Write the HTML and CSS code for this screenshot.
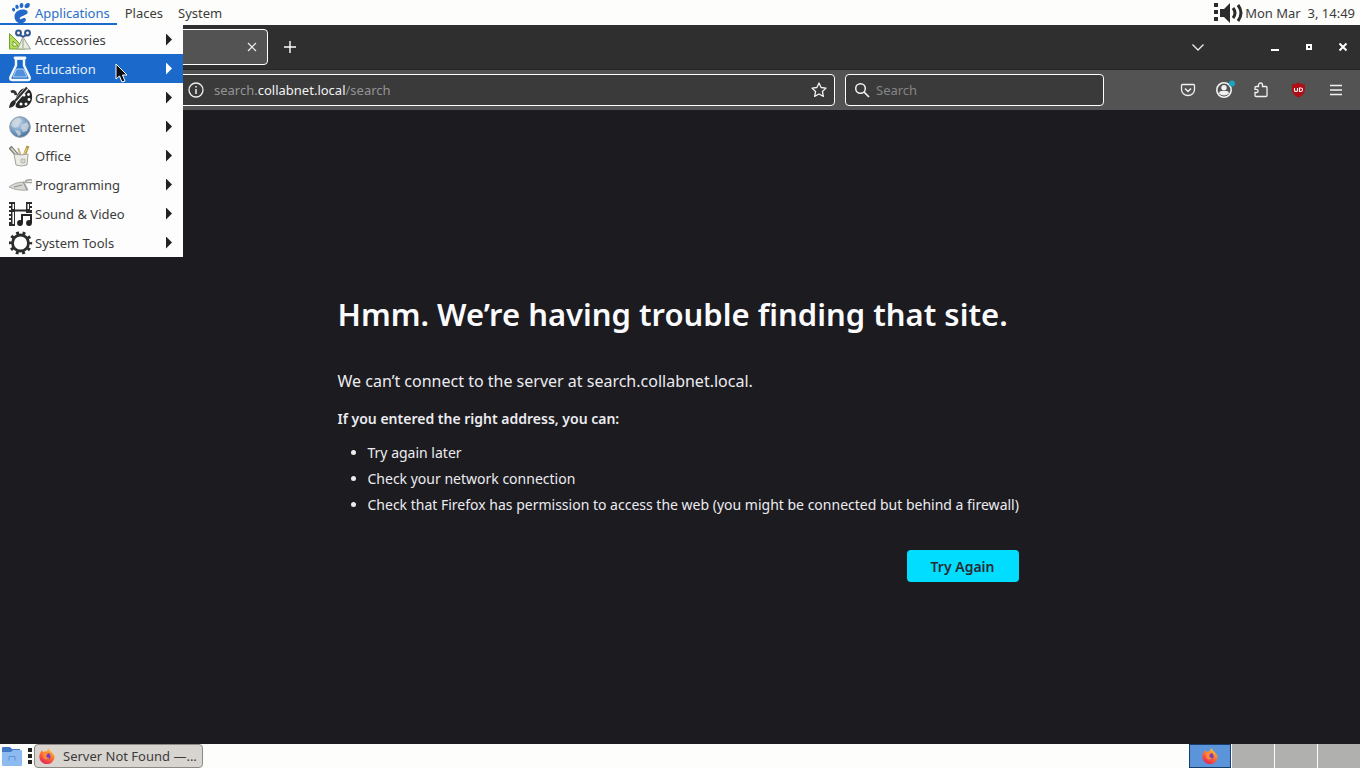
FILE: index.html
```html
<!DOCTYPE html>
<html lang="en">
<head>
<meta charset="utf-8">
<title>Server Not Found</title>
<link rel="stylesheet" href="styles.css">
</head>
<body>
<div class="desktop">
  <header class="panel panel-top">
    <nav class="menubar" aria-label="Desktop menus">
      <button class="menubar-item is-open" aria-expanded="true">
        <svg viewBox="0 0 22 22" width="22" height="22" aria-hidden="true">
          <path d="M18.500 1C21 .5 21.500 3 20.300 4.800C19 6.800 15.500 6.500 15.500 4.500C15.500 2.800 17 1.300 18.500 1Z" fill="#2468cc"/>
          <ellipse cx="12.500" cy="3.600" rx="1.900" ry="2.500" transform="rotate(8 12.500 3.600)" fill="#2468cc"/>
          <ellipse cx="8" cy="4.900" rx="1.700" ry="2.100" transform="rotate(-12 8 4.900)" fill="#2468cc"/>
          <ellipse cx="4.600" cy="7.600" rx="1.500" ry="1.800" transform="rotate(-25 4.600 7.600)" fill="#2468cc"/>
          <path d="M16.500 8C12.500 6.500 5.500 9 5.500 14.500C5.500 19 9 21.800 12.500 21.300C15.500 20.900 17.500 18.500 16.700 16.700C15.800 15 13.300 16.500 12.200 17C10.800 17.600 10.200 16.300 11.200 15.400C13 13.800 19 12.500 18.700 10C18.600 9 17.400 8.400 16.500 8Z" fill="#2468cc"/>
        </svg>
        <span>Applications</span>
      </button>
      <button class="menubar-item">Places</button>
      <button class="menubar-item">System</button>
    </nav>
    <div class="tray">
      <svg viewBox="0 0 31 22" width="31" height="22" role="img" aria-label="Volume">
        <path d="M1 1h4v4H1zM1 8h4v4H1zM1 15h4v4H1zM7 7h4l6-6v20l-6-6H7z" fill="#2b2b2b"/>
        <path d="M20 6q4 5 0 10" fill="none" stroke="#2b2b2b" stroke-width="3"/>
        <path d="M25 3q6 8 0 16" fill="none" stroke="#2b2b2b" stroke-width="3"/>
      </svg>
      <time class="clock">Mon Mar&nbsp; 3, 14:49</time>
    </div>
    <div class="menu" role="menu">
      <button class="menu-item" role="menuitem">
        <svg viewBox="0 0 22 22" width="22" height="22" aria-hidden="true">
          <path d="M.5 4.500L16 20H.5Z" fill="#b5dc58" stroke="#6fa52b"/><path d="M4 12l5 5H4z" fill="#fff" stroke="#6fa52b"/>
          <path d="M14 8l7.500 12H8.500z" fill="#e8ebe0" stroke="#98a18c"/><path d="M14 10v9" stroke="#98a18c"/>
          <circle cx="9.500" cy="4" r="2.400" fill="none" stroke="#2d568f" stroke-width="2"/><circle cx="18.500" cy="4" r="2.400" fill="none" stroke="#2d568f" stroke-width="2"/>
          <path d="M11 6q3 3 6 0" fill="none" stroke="#2d568f" stroke-width="1.800"/>
        </svg>
        <span class="menu-label">Accessories</span><span class="menu-arrow"></span>
      </button>
      <button class="menu-item is-selected" role="menuitem">
        <svg viewBox="0 0 22 26" width="22" height="26" aria-hidden="true">
          <path d="M7 2.500h8v7l5.500 11.500q1 3-2 3h-15q-3 0-2-3L7 9.500z" fill="#1b6acb" stroke="#f4f8fc" stroke-width="2.400"/>
          <path d="M6 2h10" stroke="#f4f8fc" stroke-width="2.800" stroke-linecap="round"/>
          <path d="M7.500 13h7l3.500 8H4z" fill="#4f8fdc" stroke="#b9d4f2"/>
        </svg>
        <span class="menu-label">Education</span><span class="menu-arrow"></span>
      </button>
      <button class="menu-item" role="menuitem">
        <svg viewBox="0 0 24 24" width="24" height="24" aria-hidden="true">
          <path d="M13 3c7-3 11 3 10 10-1 7-8 10-14 9-4-1-2-4-1-6s-2-4 0-7 3-5 5-6z" fill="#262827"/>
          <g fill="#fff"><circle cx="15" cy="9" r="1.500"/><circle cx="19.500" cy="8.500" r="1.400"/><circle cx="20" cy="13.500" r="1.400"/><circle cx="17" cy="18" r="1.500"/><circle cx="12" cy="18" r="1.500"/></g>
          <path d="M3 19L18 2" stroke="#fff" stroke-width="4"/><path d="M6 15L18 1.500" stroke="#333" stroke-width="2.300"/>
          <path d="M0 22q1-7 5-8l2 2q-1 5-7 6z" fill="#262827"/><path d="M2 6q4-2 5 3" stroke="#333" stroke-width="2.800" fill="none"/>
        </svg>
        <span class="menu-label">Graphics</span><span class="menu-arrow"></span>
      </button>
      <button class="menu-item" role="menuitem">
        <svg viewBox="0 0 22 22" width="22" height="22" aria-hidden="true">
          <defs><radialGradient id="globe" cx=".4" cy=".3" r=".8"><stop offset="0" stop-color="#c8d9ea"/><stop offset=".6" stop-color="#7099c2"/><stop offset="1" stop-color="#355e8c"/></radialGradient></defs>
          <circle cx="11" cy="11" r="10.300" fill="url(#globe)" stroke="#8a9bab"/>
          <path d="M3 6q4-5 8-4l2 3-4 2 1 3-4 2-4-2zM13 9l5-3 2 4-2 5-4 1-2-4zM6 14l5 1 1 4-3 1z" fill="#d9dedf" opacity=".7"/>
        </svg>
        <span class="menu-label">Internet</span><span class="menu-arrow"></span>
      </button>
      <button class="menu-item" role="menuitem">
        <svg viewBox="0 0 22 22" width="22" height="22" aria-hidden="true">
          <path d="M1 2l8 9" stroke="#77786f" stroke-width="4"/><path d="M2 3l7 8" stroke="#d8d8cf" stroke-width="1.800"/>
          <path d="M9 3l3 8" stroke="#c6b28b" stroke-width="2"/><path d="M19 1l-4 10" stroke="#b79543" stroke-width="3"/><path d="M18 3l-3 7" stroke="#f0d681"/>
          <path d="M5 9q7 2 14 0l-1 11q-6 2-11 0z" fill="#ecece7" stroke="#a4a49d"/><path d="M12 14h4v4h-4z" fill="#d8d8d2" stroke="#a9a9a1" stroke-width=".7"/>
        </svg>
        <span class="menu-label">Office</span><span class="menu-arrow"></span>
      </button>
      <button class="menu-item" role="menuitem">
        <svg viewBox="0 0 24 22" width="24" height="22" aria-hidden="true">
          <path d="M0 13q6-5 15-5l4 8q-11 1-19-3z" fill="#d7d7d4" stroke="#aaa9a5"/><path d="M14 8l4 8M5 13l8-2" stroke="#8e8e8b"/><path d="M16 9q0-4 7-3M17 8.500h6" fill="none" stroke="#a3a39f" stroke-width="1.500"/>
        </svg>
        <span class="menu-label">Programming</span><span class="menu-arrow"></span>
      </button>
      <button class="menu-item" role="menuitem">
        <svg viewBox="0 0 24 24" width="24" height="24" aria-hidden="true">
          <path d="M0 0h6v24H0zM17 0h6v11h-6z" fill="#2b2b2b"/><path d="M6 8.500h12" stroke="#2b2b2b" stroke-width="2"/>
          <path d="M0 2h2v2H0zM0 6h2v2H0zM0 10h2v2H0zM0 14h2v2H0zM0 18h2v2H0zM21 2h2v2h-2zM21 6h2v2h-2zM3.500 2H5v5H3.500zM3.500 10H5v12H3.500zM18.500 2H20v5h-1.500z" fill="#fff"/>
          <path d="M13 21v-8h9v8" fill="#fff" stroke="#262626" stroke-width="2"/><circle cx="11" cy="21" r="2.900" fill="#222"/><circle cx="20" cy="21" r="2.900" fill="#222"/>
        </svg>
        <span class="menu-label">Sound &amp; Video</span><span class="menu-arrow"></span>
      </button>
      <button class="menu-item" role="menuitem">
        <svg viewBox="0 0 24 24" width="24" height="24" aria-hidden="true">
          <circle cx="11.500" cy="12" r="10" fill="none" stroke="#2a2d2e" stroke-width="3.400" stroke-dasharray="2.800 3.483" stroke-dashoffset="1.400"/><circle cx="11.500" cy="12" r="8" fill="none" stroke="#2a2d2e" stroke-width="2.800"/>
        </svg>
        <span class="menu-label">System Tools</span><span class="menu-arrow"></span>
      </button>
    </div>
    <svg class="pointer" viewBox="0 0 14 21" width="14" height="21" aria-hidden="true">
      <path d="M1 1v15l3.500-3 2.500 6 3-1-2.500-6H12z" fill="#0b0d12" stroke="#fff"/>
    </svg>
  </header>

  <section class="browser">
    <div class="tabstrip">
      <div class="tab">
        <button class="tab-close" aria-label="Close tab"><svg viewBox="0 0 10 10" width="10" height="10"><path d="M1 1l8 8M9 1L1 9" stroke="#eee" stroke-width="1.200"/></svg></button>
      </div>
      <button class="icon-button" aria-label="New tab"><svg viewBox="0 0 14 14" width="14" height="14"><path d="M7 1v12M1 7h12" stroke="#fff" stroke-width="1.400"/></svg></button>
      <div class="window-controls">
        <button class="icon-button tab-list" aria-label="List all tabs"><svg viewBox="0 0 14 14" width="14" height="14"><path d="M1.500 4.500L7 10l5.500-5.500" fill="none" stroke="#eee" stroke-width="1.300"/></svg></button>
        <button class="icon-button" aria-label="Minimize"><svg viewBox="0 0 12 12" width="12" height="12"><path d="M2 9h8" stroke="#fff" stroke-width="2"/></svg></button>
        <button class="icon-button" aria-label="Restore"><svg viewBox="0 0 12 12" width="12" height="12"><path d="M4 4h4v4H4z" fill="none" stroke="#fff" stroke-width="2"/></svg></button>
        <button class="icon-button" aria-label="Close"><svg viewBox="0 0 12 12" width="12" height="12"><path d="M2.500 2.500l7 7M9.500 2.500l-7 7" stroke="#fff" stroke-width="2"/></svg></button>
      </div>
    </div>

    <div class="toolbar">
      <div class="field url-field">
        <svg viewBox="0 0 16 16" width="16" height="16" role="img" aria-label="Site information"><circle cx="8" cy="8" r="7" fill="none" stroke="#eee" stroke-width="1.300"/><path d="M8 7v5M8 4v1.500" stroke="#eee" stroke-width="1.500"/></svg>
        <div class="url-text" role="textbox" contenteditable="true" aria-label="Address" spellcheck="false">search.<b class="url-host">collabnet.local</b>/search</div>
        <button class="star" aria-label="Bookmark this page"><svg viewBox="0 0 16 16" width="16" height="16"><path d="M8 1l2.100 4.500 4.900.6-3.600 3.400 1 4.900L8 12l-4.400 2.400 1-4.900L1 6.100l4.900-.6z" fill="none" stroke="#f2f2f2" stroke-width="1.300" stroke-linejoin="round"/></svg></button>
      </div>
      <label class="field search-field">
        <svg viewBox="0 0 16 16" width="16" height="16" aria-hidden="true"><circle cx="6.500" cy="6.500" r="4.800" fill="none" stroke="#f2f2f2" stroke-width="1.500"/><path d="M10 10l5 5" stroke="#f2f2f2" stroke-width="1.700"/></svg>
        <input class="search-input" type="text" placeholder="Search" aria-label="Search">
      </label>
      <div class="actions">
        <button class="icon-button" aria-label="Save to Pocket"><svg viewBox="0 0 16 16" width="16" height="16"><path d="M2.500 2.500h11q1 0 1 1V7.500a6.500 6 0 0 1-13 0V3.500q0-1 1-1z" fill="none" stroke="#f2f2f2" stroke-width="1.300"/><path d="M5 6.500l3 3 3-3" fill="none" stroke="#f2f2f2" stroke-width="1.500"/></svg></button>
        <button class="icon-button" aria-label="Account"><svg viewBox="0 0 20 20" width="20" height="20"><circle cx="9" cy="10" r="7.200" fill="none" stroke="#f2f2f2" stroke-width="1.600"/><circle cx="9" cy="7.800" r="2.700" fill="#f2f2f2"/><path d="M4 13.500q0-2.500 2-2.500h6q2 0 2 2.500-5 4-10 0z" fill="#f2f2f2"/><circle cx="17" cy="3.500" r="3" fill="#18a5c4"/></svg></button>
        <button class="icon-button" aria-label="Extensions"><svg viewBox="0 0 16 16" width="16" height="16"><path d="M4.500 4.500V3a2 2 0 0 1 4 0v1.500H12q1 0 1 1v8q0 1-1 1H2q-1 0-1-1v-3h1.500a1.600 1.600 0 0 0 0-3.200H1V5.500q0-1 1-1z" fill="none" stroke="#f2f2f2" stroke-width="1.300"/></svg></button>
        <button class="icon-button" aria-label="uBlock Origin"><svg viewBox="0 0 16 16" width="16" height="16"><path d="M7.500 .5q3 1.800 6.500 2v4.500q0 6-6.500 8.500Q1 13 1 7V2.500Q4.500 2.300 7.500 .5z" fill="#b00d16"/><path d="M3.500 6v2.200q0 1.300 1.500 1.300t1.500-1.300V6M8.500 6v3.500h1q2 0 2-1.800T9.500 6z" fill="none" stroke="#fff" stroke-width="1.100"/></svg></button>
        <button class="icon-button" aria-label="Application menu"><svg viewBox="0 0 14 14" width="14" height="14"><path d="M1 2.500h12M1 7h12M1 11.500h12" stroke="#f2f2f2" stroke-width="1.300"/></svg></button>
      </div>
    </div>

    <main class="page">
      <div class="error">
        <h1 class="error-title">Hmm. We’re having trouble finding that site.</h1>
        <p class="error-lead">We can’t connect to the server at search.collabnet.local.</p>
        <p class="error-hint">If you entered the right address, you can:</p>
        <ul class="error-list">
          <li>Try again later</li>
          <li>Check your network connection</li>
          <li>Check that Firefox has permission to access the web (you might be connected but behind a firewall)</li>
        </ul>
        <div class="error-actions"><button class="primary">Try Again</button></div>
      </div>
    </main>
  </section>

  <footer class="panel panel-bottom">
    <button class="show-desktop" aria-label="Show desktop"><svg viewBox="0 0 20 20" width="20" height="20"><path d="M0 2q0-1 1-1h7l2 2h8v6H0z" fill="#4379c4"/><path d="M0 6h9l2-2h8q1 0 1 1v14q0 1-1 1H1q-1 0-1-1z" fill="#8dbbf0"/><path d="M7 14.500v-4h6v4" fill="none" stroke="#5b93d8"/></svg></button>
    <svg class="handle" viewBox="0 0 4 18" width="4" height="18" aria-hidden="true"><path d="M0 1h4v4H0zM0 7h4v4H0zM0 13h4v4H0z" fill="#222"/></svg>
    <button class="task">
      <svg viewBox="0 0 16 16" width="16" height="16" aria-hidden="true">
        <defs><linearGradient id="fox" x1=".8" y1="0" x2=".3" y2="1"><stop offset="0" stop-color="#ffd43a"/><stop offset=".45" stop-color="#ff7a2c"/><stop offset="1" stop-color="#e3225c"/></linearGradient></defs>
        <path id="fox-body" d="M10 0q0 2 2 3.500t3.500 4.500A7.600 7.600 0 1 1 1.500 4.500L3 2l1 2q2-1 3.500-.5Q8 1.500 10 0z" fill="url(#fox)"/>
        <circle cx="8.300" cy="8.300" r="3.200" fill="#7a3fc0"/><path d="M4 5q3-1.500 5 .5L7.500 7q-1 3 3 3-3 3-6 0z" fill="#ff8a34"/>
      </svg>
      <span class="task-label">Server Not Found —...</span>
    </button>
    <div class="pager">
      <button class="workspace is-current" aria-label="Workspace 1">
        <svg viewBox="0 0 16 16" width="16" height="16" aria-hidden="true"><use href="#fox-body"/><circle cx="8.300" cy="8.300" r="3.200" fill="#7a3fc0"/><path d="M4 5q3-1.500 5 .5L7.500 7q-1 3 3 3-3 3-6 0z" fill="#ff8a34"/></svg>
      </button>
      <button class="workspace" aria-label="Workspace 2"></button>
      <button class="workspace" aria-label="Workspace 3"></button>
      <button class="workspace" aria-label="Workspace 4"></button>
    </div>
  </footer>
</div>
</body>
</html>
```
FILE: styles.css
```css
* { box-sizing: border-box; }

body {
  margin: 0;
  font-family: "Noto Sans", sans-serif;
  font-size: 13px;
  color: #3c3c3c;
}

button {
  margin: 0;
  padding: 0;
  border: 0;
  background: none;
  font: inherit;
  color: inherit;
}

svg { display: block; flex: none; }

.desktop {
  display: flex;
  flex-direction: column;
  min-height: 100vh;
}

.panel {
  display: flex;
  background: #fdfdfb;
}

/* Top panel */
.panel-top {
  position: relative;
  justify-content: space-between;
  height: 25px;
}

.menubar { display: flex; }

.menubar-item {
  display: flex;
  align-items: center;
  gap: 4px;
  padding: 0 7px 0 8px;
}

.menubar-item.is-open {
  padding-left: 9px;
  box-shadow: inset 0 -2px #1b6acb;
  color: #2a6fc9;
}

.tray {
  display: flex;
  align-items: center;
  gap: 1px;
  padding-right: 5px;
}

.menu {
  position: absolute;
  top: 100%;
  left: 0;
  z-index: 2;
  width: 183px;
  background: #fdfdfd;
}

.menu-item {
  display: grid;
  grid-template-columns: 24px 1fr auto;
  align-items: center;
  column-gap: 2px;
  width: 100%;
  height: 29px;
  padding: 0 11px 0 9px;
  text-align: left;
}

.menu-item.is-selected {
  background: #1b6acb;
  color: #e4eefa;
}

.menu-arrow {
  width: 6px;
  height: 12px;
  background: #222;
  clip-path: polygon(0 0, 100% 50%, 0 100%);
}

.is-selected .menu-arrow { background: #fff; }

.pointer {
  position: absolute;
  top: 63px;
  left: 115px;
  z-index: 3;
}

/* Browser window */
.browser {
  display: flex;
  flex: 1;
  flex-direction: column;
  background: #1c1b20;
  color: #fbfbfe;
}

.tabstrip {
  display: flex;
  align-items: center;
  gap: 8px;
  height: 45px;
  background: #2f2f2f;
  border-bottom: 1px solid #242424;
}

.tab {
  display: flex;
  align-items: center;
  justify-content: flex-end;
  width: 268px;
  height: 36px;
  padding-right: 10px;
  border: 1px solid #fff;
  border-radius: 4px;
  background: #535353;
}

.icon-button {
  display: grid;
  place-items: center;
  width: 28px;
  height: 28px;
}

.window-controls {
  display: flex;
  gap: 6px;
  margin-left: auto;
  padding-right: 3px;
}

.tab-list { margin-right: 43px; }

.toolbar {
  display: flex;
  align-items: center;
  gap: 10px;
  height: 40px;
  padding: 0 10px 0 160px;
  background: #535353;
}

.field {
  display: flex;
  align-items: center;
  height: 32px;
  border: 1px solid #fff;
  border-radius: 4px;
  background: #3a3a3a;
}

.url-field {
  flex: 1;
  gap: 10px;
  padding: 0 7px 0 27px;
}

.url-text {
  flex: 1;
  color: #949494;
  outline: 0;
}

.url-host {
  font-weight: 400;
  color: #f2f2f2;
}

.search-field {
  width: 259px;
  gap: 6px;
  padding: 0 8px;
}

.search-input {
  flex: 1;
  min-width: 0;
  padding: 0;
  border: 0;
  background: none;
  font: inherit;
  color: #f2f2f2;
  outline: 0;
}

.search-input::placeholder { color: #858585; opacity: 1; }

.actions {
  display: flex;
  justify-content: flex-end;
  gap: 9px;
  width: 236px;
}

/* Error page */
.page {
  display: flex;
  flex: 1;
  align-items: center;
  justify-content: center;
  padding-top: 22px;
}

.error {
  width: 685px;
  color: #ececf0;
  font-size: 14px;
}

.error-title {
  margin: 0 0 34px;
  color: #fbfbfe;
  font-size: 31px;
  font-weight: 600;
  line-height: 40px;
}

.error-lead {
  margin: 0 0 12px;
  font-size: 16px;
  line-height: 26px;
}

.error-hint {
  margin: 0 0 8px;
  font-weight: 600;
  line-height: 26px;
}

.error-list {
  margin: 0 0 32px;
  padding-left: 30px;
  line-height: 26px;
}

.error-actions {
  display: flex;
  justify-content: flex-end;
  padding-right: 4px;
}

.primary {
  height: 32px;
  padding: 0 24px;
  border-radius: 4px;
  background: #00ddff;
  color: #2b2a33;
  font-weight: 600;
}

/* Bottom panel */
.panel-bottom {
  align-items: center;
  height: 24px;
  padding-left: 2px;
}

.handle { margin: 0 2px 0 6px; }

.task {
  display: flex;
  align-items: center;
  gap: 8px;
  width: 169px;
  height: 24px;
  padding: 0 4px;
  border: 1px solid #8d8984;
  border-radius: 4px;
  background: #d8d4d0;
}

.task-label { white-space: nowrap; }

.pager {
  display: flex;
  gap: 1px;
  align-self: stretch;
  margin-left: auto;
}

.workspace {
  display: grid;
  place-items: center;
  width: 42px;
  background: #b0b0ae;
}

.workspace.is-current {
  border: 1px solid #163d6b;
  background: #5b94d8;
}
```
